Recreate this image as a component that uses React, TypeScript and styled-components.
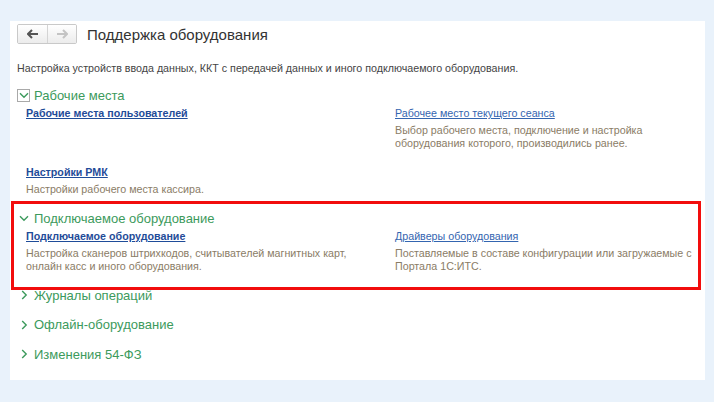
import styled, { createGlobalStyle } from 'styled-components';

const GlobalStyle = createGlobalStyle`
  html, body {
    margin: 0;
    padding: 0;
    background: #e9f2fb;
    font-family: "Liberation Sans", Arial, sans-serif;
  }
`;

const Page = styled.div`
  width: 714px;
  height: 402px;
  padding: 21px 9px 0 10px;
  box-sizing: border-box;
`;

const Panel = styled.div`
  background: #fff;
  height: 359px;
  padding: 3px 4px 0 7px;
  box-sizing: border-box;
`;

const TopBar = styled.div`
  display: flex;
  align-items: center;
  gap: 10px;
  height: 20px;
`;

const NavGroup = styled.div`
  display: flex;
  border: 1px solid #c9c9c9;
  border-radius: 2px;
  overflow: hidden;
`;

const NavButton = styled.button<{ $enabled?: boolean }>`
  width: 29px;
  height: 18px;
  padding: 0;
  border: none;
  background: linear-gradient(#ffffff, #ececec);
  display: flex;
  align-items: center;
  justify-content: center;
  color: ${({ $enabled }) => ($enabled ? '#555' : '#c4c4c4')};
  & + & {
    border-left: 1px solid #d4d4d4;
  }
`;

const Title = styled.h1`
  margin: 0;
  font-size: 15px;
  font-weight: normal;
  color: #333;
`;

const Intro = styled.div`
  margin-top: 17px;
  font-size: 10.7px;
  line-height: 14px;
  color: #444;
`;

const SectionHead = styled.div`
  display: flex;
  align-items: center;
  height: 18px;
  font-size: 13px;
  color: #3c9a5c;
`;

const Toggle = styled.span<{ $boxed?: boolean }>`
  width: ${({ $boxed }) => ($boxed ? '13px' : '10px')};
  height: 13px;
  margin-right: ${({ $boxed }) => ($boxed ? '4px' : '5px')};
  margin-left: ${({ $boxed }) => ($boxed ? '0' : '2px')};
  box-sizing: border-box;
  border: ${({ $boxed }) => ($boxed ? '1px solid #a9a9a9' : 'none')};
  display: flex;
  align-items: center;
  justify-content: center;
`;

const FirstSection = styled.div`
  margin-top: 11px;
`;

const Grid = styled.div`
  display: grid;
  grid-template-columns: 369px 300px;
  row-gap: 15px;
  margin: 2px 0 0 9px;
`;

const Cell = styled.div`
  &:nth-child(odd) {
    padding-right: 24px;
  }
`;

const Link = styled.a<{ $bold?: boolean }>`
  display: block;
  font-size: 10.7px;
  line-height: 14px;
  font-weight: ${({ $bold }) => ($bold ? 'bold' : 'normal')};
  color: ${({ $bold }) => ($bold ? '#1f4c99' : '#3465b0')};
  text-decoration: underline;
  cursor: pointer;
`;

const Note = styled.div`
  margin-top: 4px;
  font-size: 10.7px;
  line-height: 13px;
  color: #8a7c66;
`;

const Highlight = styled.div`
  margin: 5px 0 0 -6px;
  border: 3px solid #f20d0d;
  padding: 5px 0 14px 3px;
`;

const Collapsed = styled.div`
  display: flex;
  flex-direction: column;
  gap: 11.5px;
  margin-top: -4px;
`;

const ArrowLeft = () => (
  <svg width="12" height="10" viewBox="0 0 12 10">
    <path d="M1 5h10M5 1L1 5l4 4" stroke="currentColor" strokeWidth="2" fill="none" />
  </svg>
);

const ArrowRight = () => (
  <svg width="12" height="10" viewBox="0 0 12 10">
    <path d="M1 5h10M7 1l4 4-4 4" stroke="currentColor" strokeWidth="2" fill="none" />
  </svg>
);

const ChevronDown = () => (
  <svg width="10" height="7" viewBox="0 0 10 7">
    <path d="M1 1.2l4 4 4-4" stroke="#3c9a5c" strokeWidth="1.4" fill="none" />
  </svg>
);

const ChevronRight = () => (
  <svg width="7" height="10" viewBox="0 0 7 10">
    <path d="M1.2 1l4 4-4 4" stroke="#3c9a5c" strokeWidth="1.4" fill="none" />
  </svg>
);

type Item = { title: string; note?: string; bold?: boolean };

const Items = ({ items }: { items: Item[] }) => (
  <Grid>
    {items.map((it, i) => (
      <Cell key={i}>
        {it.title && <Link $bold={it.bold}>{it.title}</Link>}
        {it.note && <Note>{it.note}</Note>}
      </Cell>
    ))}
  </Grid>
);

export default function App() {
  return (
    <Page>
      <GlobalStyle />
      <Panel>
        <TopBar>
          <NavGroup>
            <NavButton $enabled>
              <ArrowLeft />
            </NavButton>
            <NavButton>
              <ArrowRight />
            </NavButton>
          </NavGroup>
          <Title>Поддержка оборудования</Title>
        </TopBar>
        <Intro>
          Настройка устройств ввода данных, ККТ с передачей данных и иного подключаемого оборудования.
        </Intro>

        <FirstSection>
          <SectionHead>
            <Toggle $boxed>
              <ChevronDown />
            </Toggle>
            Рабочие места
          </SectionHead>
          <Items
            items={[
              { title: 'Рабочие места пользователей', bold: true },
              {
                title: 'Рабочее место текущего сеанса',
                note: 'Выбор рабочего места, подключение и настройка оборудования которого, производились ранее.',
              },
              { title: 'Настройки РМК', bold: true, note: 'Настройки рабочего места кассира.' },
            ]}
          />
        </FirstSection>

        <Highlight>
          <SectionHead>
            <Toggle>
              <ChevronDown />
            </Toggle>
            Подключаемое оборудование
          </SectionHead>
          <Items
            items={[
              {
                title: 'Подключаемое оборудование',
                bold: true,
                note: 'Настройка сканеров штрихкодов, считывателей магнитных карт, онлайн касс и иного оборудования.',
              },
              {
                title: 'Драйверы оборудования',
                note: 'Поставляемые в составе конфигурации или загружаемые с Портала 1С:ИТС.',
              },
            ]}
          />
        </Highlight>

        <Collapsed>
          {['Журналы операций', 'Офлайн-оборудование', 'Изменения 54-ФЗ'].map((t) => (
            <SectionHead key={t}>
              <Toggle>
                <ChevronRight />
              </Toggle>
              {t}
            </SectionHead>
          ))}
        </Collapsed>
      </Panel>
    </Page>
  );
}
